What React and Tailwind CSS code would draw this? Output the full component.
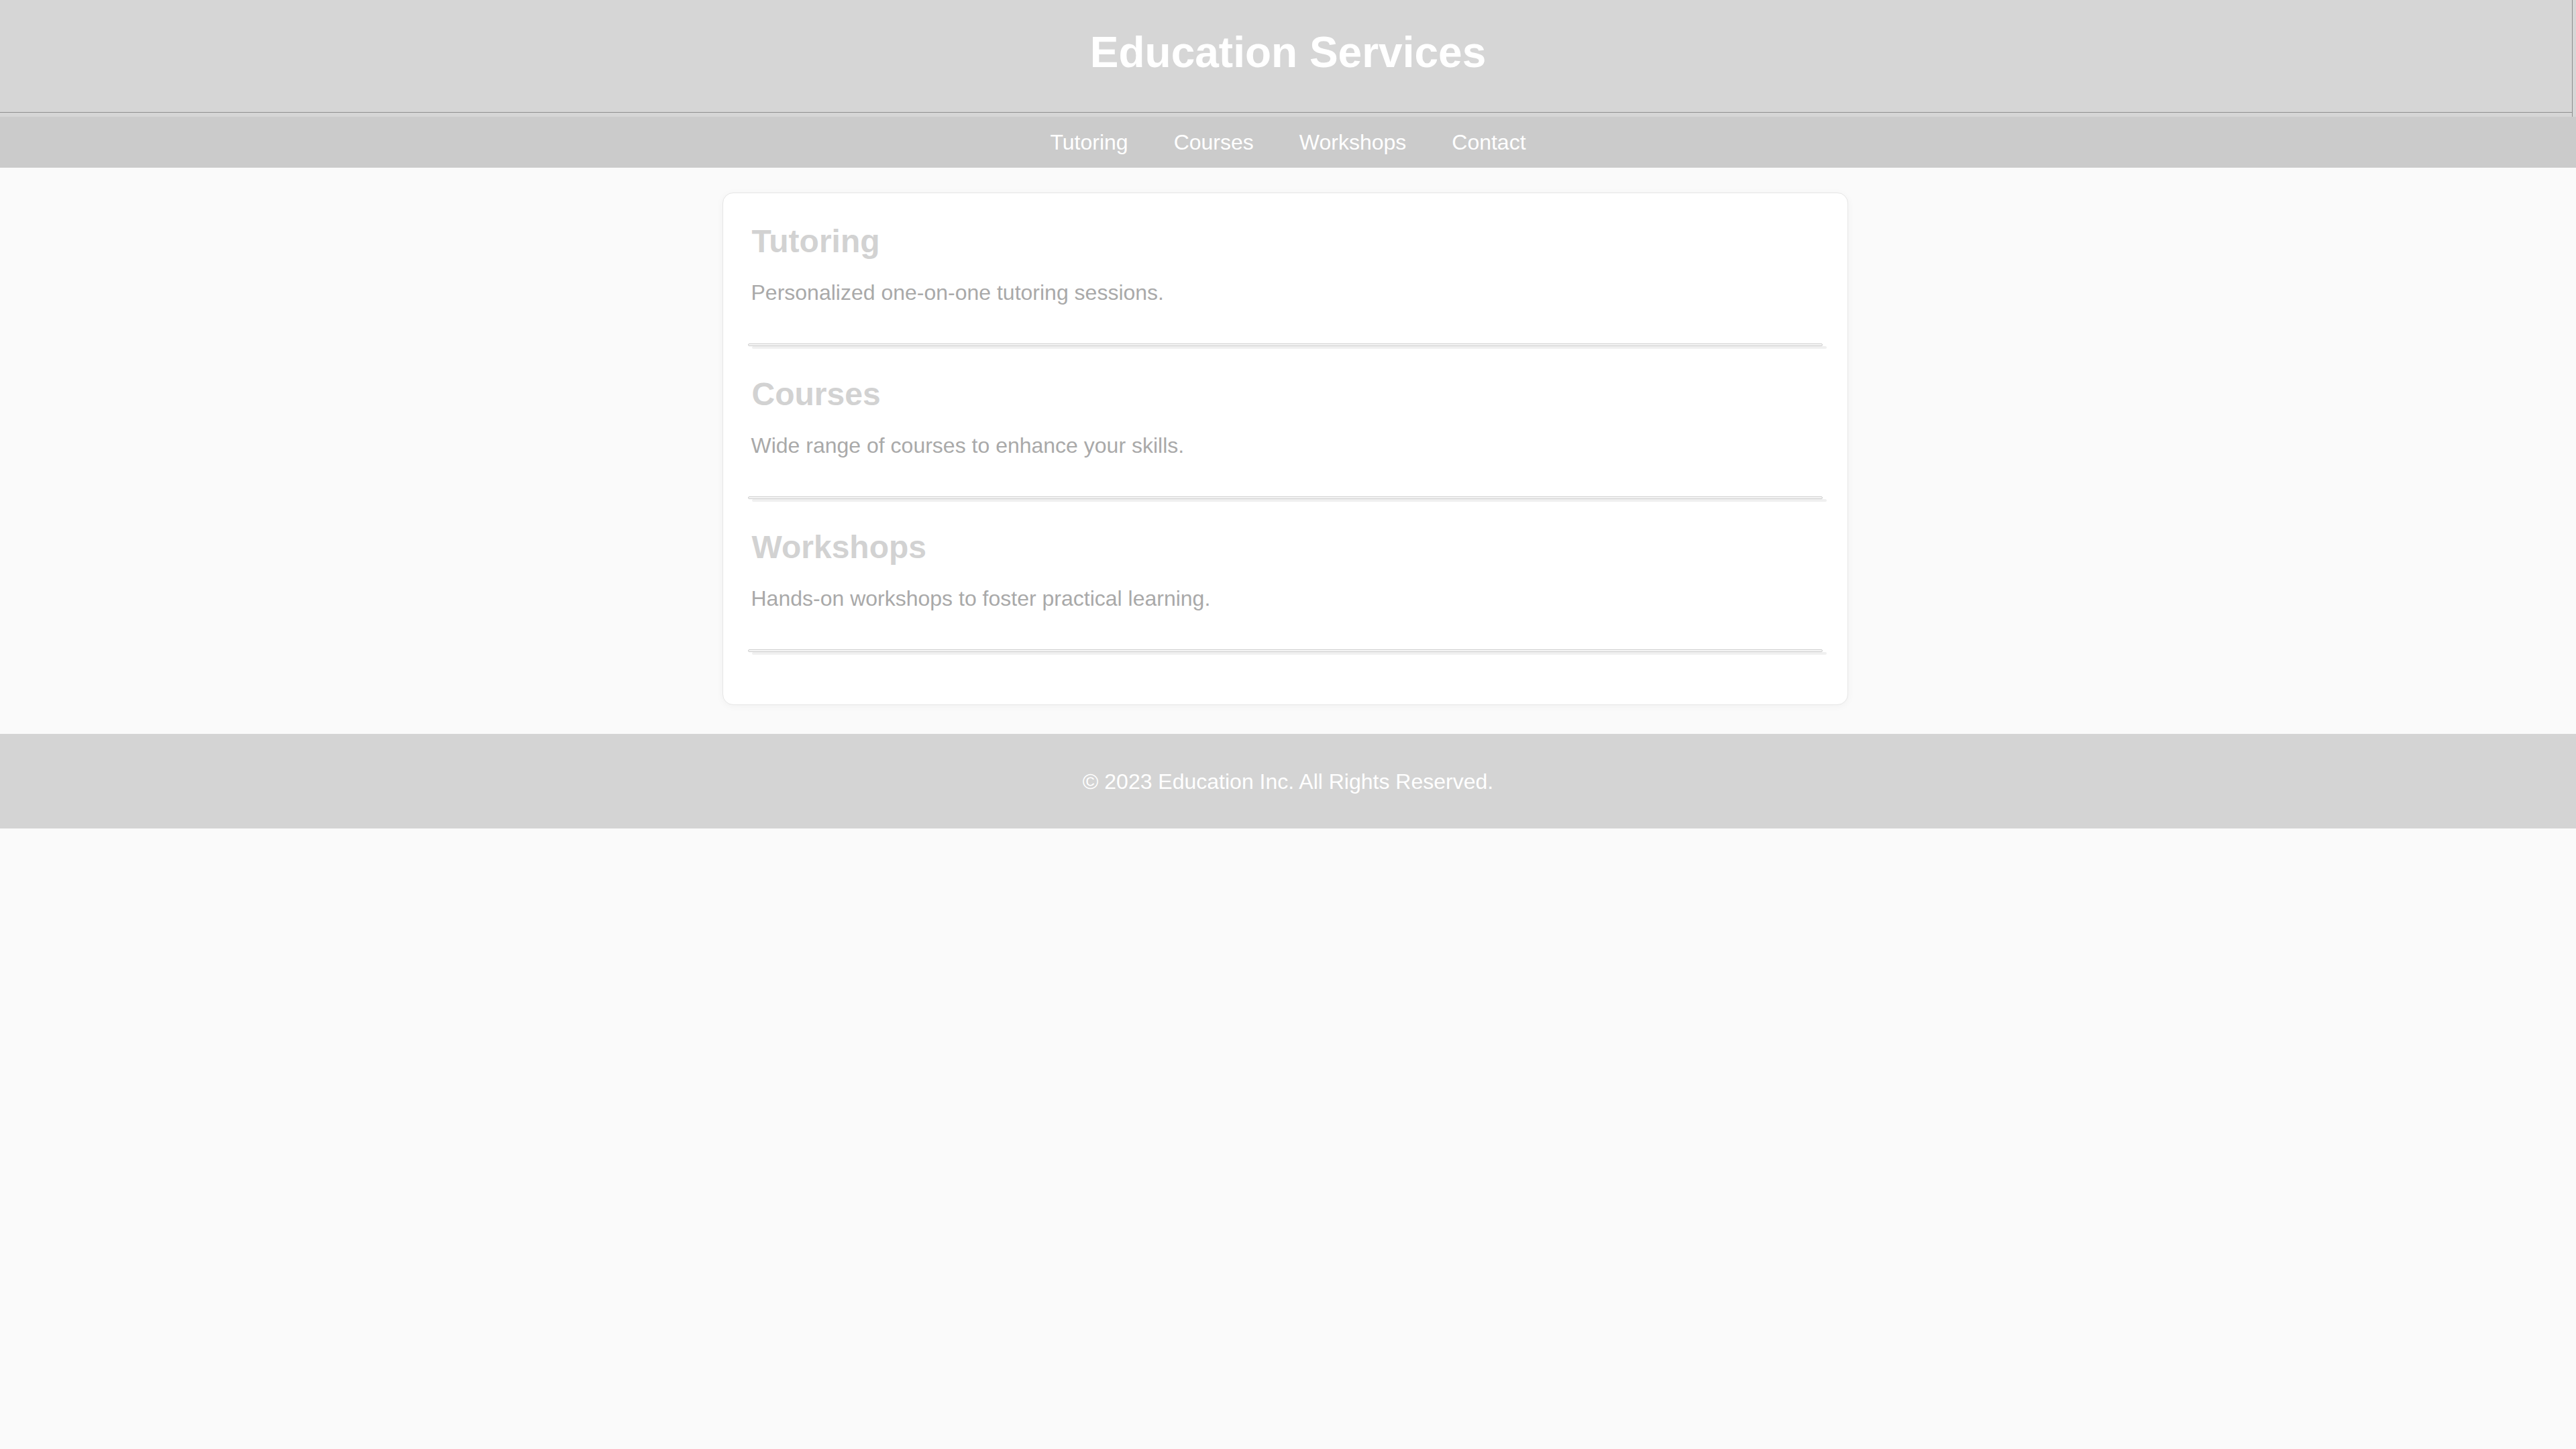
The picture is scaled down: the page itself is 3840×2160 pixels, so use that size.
import React from "react";

const links = ["Tutoring", "Courses", "Workshops", "Contact"];

const services = [
  { title: "Tutoring", text: "Personalized one-on-one tutoring sessions." },
  { title: "Courses", text: "Wide range of courses to enhance your skills." },
  { title: "Workshops", text: "Hands-on workshops to foster practical learning." },
];

export default function App() {
  return (
    <div className="min-h-[2160px] bg-[#fafafa] font-['Liberation_Sans',Arial,sans-serif]">
      {/* Header */}
      <header className="flex bg-[#d6d6d6]">
        <div className="flex-1 border-r border-[#8e8e8e]">
          <div className="h-[168px] border-b border-[#8e8e8e] pt-[41px] pl-[6px] text-center">
            <h1 className="text-[64px] leading-[74px] font-bold text-white">Education Services</h1>
          </div>
          <div className="h-[6px]" />
        </div>
        <div className="w-[5px]" />
      </header>

      {/* Nav */}
      <nav className="flex bg-[#cbcbcb]">
        <div className="flex-1 pt-[14px] pb-[14px]">
          <ul className="flex justify-center gap-[68px] text-[32px] leading-[48px] text-white">
            {links.map((l) => (
              <li key={l}>
                <a href="#">{l}</a>
              </li>
            ))}
          </ul>
        </div>
      </nav>

      {/* Services card */}
      <main className="flex justify-center pr-[9px] pt-[37px] pb-[43px]">
        <div className="w-[1678px] rounded-[16px] border border-[#e6e6e6] bg-white pl-[39px] pr-[37px] pt-[44px] pb-[34px] shadow-[0_2px_12px_rgba(0,0,0,0.04)]">
          {services.map((s) => (
            <section key={s.title} className="mb-[44px]">
              <h2 className="pl-[4px] text-[48px] leading-[56px] font-bold text-[#d2d2d2]">{s.title}</h2>
              <p className="mt-[24px] pl-[3px] text-[32px] leading-[48px] text-[#a9a9a9]">{s.text}</p>
              <div className="mt-[52px] -ml-[2px] h-[4px] rounded-sm border border-[#cdcdcd] bg-[#f7f7f7] shadow-[6px_4px_0_0_#f0f0f0]" />
            </section>
          ))}
        </div>
      </main>

      {/* Footer */}
      <footer className="flex h-[141px] items-center justify-center bg-[#d4d4d4]">
        <p className="text-[32px] leading-[48px] text-white">© 2023 Education Inc. All Rights Reserved.</p>
      </footer>
    </div>
  );
}
